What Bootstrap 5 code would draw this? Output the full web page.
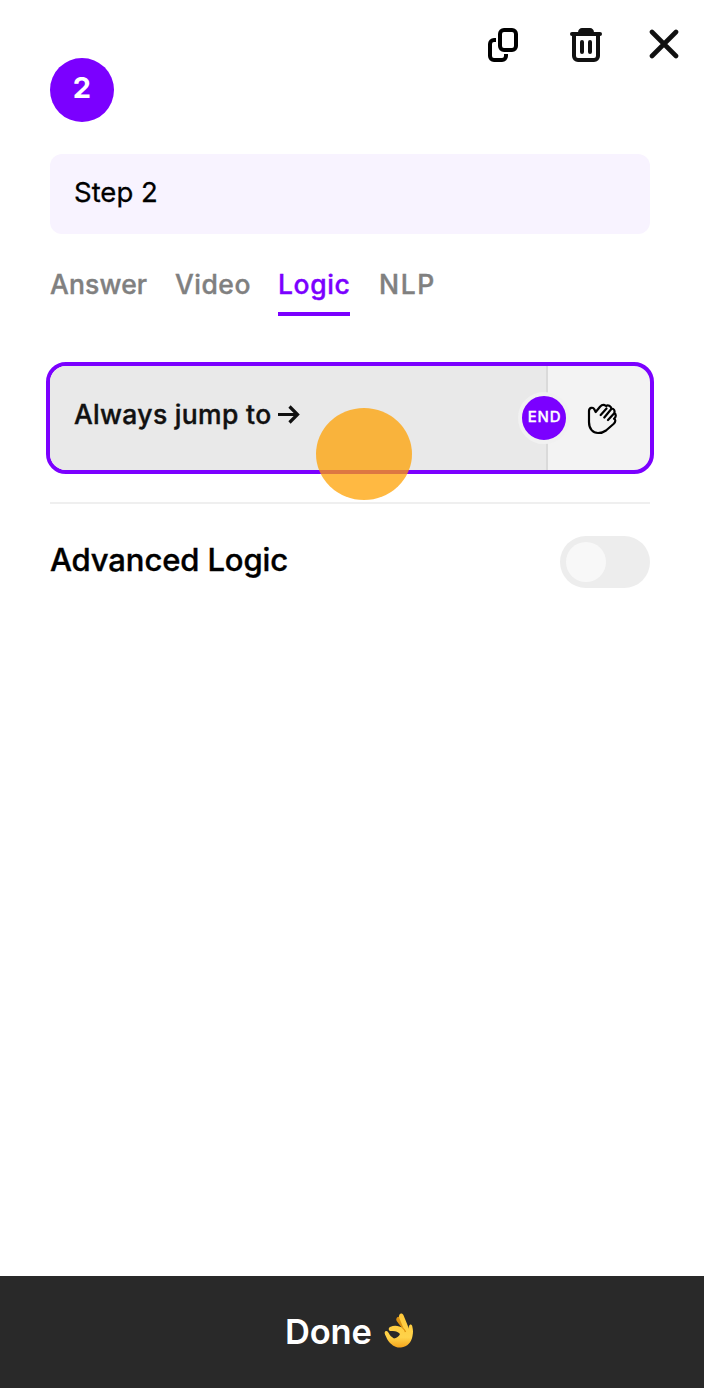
<!DOCTYPE html>
<html lang="en">
<head>
<meta charset="utf-8">
<meta name="viewport" content="width=device-width, initial-scale=1">
<title>Step 2</title>
<link href="https://cdn.jsdelivr.net/npm/bootstrap@5.3.0/dist/css/bootstrap.min.css" rel="stylesheet">
<style>
  body { font-family: Inter, "Liberation Sans", sans-serif; font-weight: 500; color: #000; background: #fff; line-height: 1; }
  svg { display: block; flex: none; }
  .panel { padding-left: 50px; padding-right: 54px; }
  .topbar { height: 122px; margin-right: -29px; }
  .tools { margin-top: 26px; }
  .copy-icon { margin-right: 47px; }
  .trash-icon { margin-right: 45px; }
  .step-number { width: 64px; height: 64px; margin-top: 58px; background: #7b00ff; font-size: 29px; font-weight: 700; padding-bottom: 5px; }
  .step-name { height: 80px; margin-top: 32px; padding: 0 24px 4px; border: 0; border-radius: 12px; background: #f8f3ff; font-size: 27.5px; font-weight: 400; color: #000; -webkit-text-stroke: .3px; }
  .step-name:focus { background: #f8f3ff; }
  .tabs { margin-top: 32px; gap: 28px; font-size: 26.5px; -webkit-text-stroke: .4px; }
  .tabs .nav-link { height: 50px; padding: 5px 0 0; color: #808080; border-bottom: 4px solid transparent; white-space: nowrap; letter-spacing: .15px; }
  .tabs .t2 { letter-spacing: .5px; }
  .tabs .nav-link.active { color: #7b00ff; border-color: #7b00ff; letter-spacing: .6px; }
  .tabs .t4 { letter-spacing: 1.6px; padding-left: 1px; }
  .t1 { width: 97px; } .t2 { width: 75px; } .t3 { width: 72px; }
  .jump { height: 112px; margin: 46px -4px 0; border: 4px solid #7b00ff; border-radius: 20px; background: #f3f3f3; }
  .jump-rule { width: 498px; padding: 0 0 7px 24px; border-right: 2px solid #dadada; border-radius: 16px 0 0 16px; background: #e9e9e9; font-size: 26.5px; color: #111; }
  .jump-text { width: 196px; letter-spacing: .32px; white-space: nowrap; -webkit-text-stroke: .4px; }
  .end-dot { width: 52px; height: 52px; left: 468px; top: 26px; border: 4px solid #f1f1f1; background: #7b00ff; font-size: 15px; letter-spacing: .8px; padding: 0 0 3px 1px; -webkit-text-stroke: .3px; }
  .hand { margin-left: 38px; margin-top: 2px; }
  .touch { width: 96px; height: 92px; left: 266px; top: 42px; background: rgba(255,161,0,.74); }
  .rule { height: 2px; margin-top: 28px; background: #efefef; }
  .advanced { height: 52px; margin-top: 32px; font-size: 31px; letter-spacing: -.12px; -webkit-text-stroke: .4px; }
  .advanced-title { padding-bottom: 6px; }
  .toggle { width: 90px; height: 52px; padding: 6px; background: #ededed; }
  .knob { width: 40px; height: 40px; background: #f8f8f8; }
  .done { height: 112px; background: #292929; font-size: 34.5px; font-weight: 600; color: #fff; letter-spacing: -.2px; }
  .done-text { width: 87px; margin-left: -5px; padding-bottom: 1px; }
</style>
</head>
<body>
<div class="vh-100 d-flex flex-column overflow-hidden">
  <main class="panel flex-grow-1">
    <header class="topbar d-flex justify-content-between align-items-start">
      <div class="step-number rounded-circle text-white d-flex align-items-center justify-content-center">2</div>
      <div class="tools d-flex">
        <svg class="copy-icon" width="36" height="38" viewBox="0 0 36 38" fill="none" stroke="#000" stroke-width="4"><rect x="14" y="4" width="16" height="20" rx="4"/><path d="M10 14H8a4 4 0 0 0-4 4v12a4 4 0 0 0 4 4h8a4 4 0 0 0 4-4v-2"/></svg>
        <svg class="trash-icon" width="34" height="38" viewBox="0 0 34 38" fill="none" stroke="#111" stroke-width="4" stroke-linecap="round"><path d="M3 8h28"/><path d="M9 6.500c0-3 2-4.500 4-4.500h8c2 0 4 1.500 4 4.500z" fill="#111" stroke="none"/><path d="M5 9v21a4 4 0 0 0 4 4h16a4 4 0 0 0 4-4V9M13 16v10M21 16v10"/></svg>
        <svg width="31" height="38" viewBox="0 0 31 38" stroke="#111" stroke-width="4.600" stroke-linecap="round"><path d="M4 6l24 24M28 6L4 30"/></svg>
      </div>
    </header>
    <input class="step-name form-control shadow-none" value="Step 2" aria-label="Step name">
    <nav class="tabs nav">
      <a class="nav-link t1" href="#">Answer</a>
      <a class="nav-link t2" href="#">Video</a>
      <a class="nav-link t3 active" href="#">Logic</a>
      <a class="nav-link t4" href="#">NLP</a>
    </nav>
    <section class="jump d-flex position-relative">
      <div class="jump-rule d-flex align-items-center"><span class="jump-text">Always jump to</span>
        <svg class="ms-2" width="22" height="20" viewBox="0 0 22 20" fill="none" stroke="#111" stroke-width="3.200"><path d="M0 9.500h19M11.500 1.500l8 8-8 8"/></svg>
      </div>
      <svg class="hand align-self-center" width="32" height="34" viewBox="0 0 32 34" fill="none" stroke="#000" stroke-width="2.200" stroke-linecap="round" stroke-linejoin="round"><path d="M9.700 10L8.300 7.200C7 4.800 3 5.500 3 9v11c0 7 4 11 9 11 4 0 6-1 8-2.500l7.500-6.500c2.500-2.300 2.200-4.500.5-5.200 2-1.800 2.500-4.300.3-5.800.8-2.500-.5-4.700-3-4.500C25 4 22 2.500 20 4c-2-1.700-4-1.500-6 .8zM14.700 13l5.800-6.500M18.300 15.500l7-8.500M22 18l6-6.500"/></svg>
      <div class="end-dot position-absolute rounded-circle text-white d-flex align-items-center justify-content-center">END</div>
      <div class="touch position-absolute rounded-circle"></div>
    </section>
    <div class="rule"></div>
    <div class="advanced d-flex align-items-center justify-content-between">
      <span class="advanced-title">Advanced Logic</span>
      <div class="toggle rounded-pill" role="switch" aria-checked="false"><div class="knob rounded-circle"></div></div>
    </div>
  </main>
  <button class="done btn rounded-0 border-0 w-100 p-0 d-flex align-items-center justify-content-center">
    <span class="done-text text-start">Done</span>
    <svg style="margin:-3px 0 0 12px" width="30" height="38" viewBox="0 0 30 38"><defs><linearGradient id="skin" x2="0" y2="1"><stop stop-color="#ffc83a"/><stop offset=".7" stop-color="#ffd34a"/><stop offset="1" stop-color="#f5a51c"/></linearGradient></defs><path d="M13 5.500c1-1.500 3-.5 4 1.500l5 10-4-1-5-6.500c-1-1.300-1-2.800 0-4z" fill="#dc9212"/><path fill="url(#skin)" d="M15.500 2.500c1-1.600 3.200-1.200 4 .8l4.300 10.500.7 3c0-2 .5-3.300 1.200-3.800 1.300-1 2.600 0 2.700 2C29 18 29.400 20 28.500 24c-1 6-5 11-11.500 11.500-6 .5-10-3-13-7-1.500-2-1.500-3.500-2.500-5-.8-1.500-1.500-4 .5-4.500 1.500-.3 2 1 3 2.500 1 2 2.500 3.500 5 5 2.500-.5 5-2 6-4.500-2-2.500-5-3.500-9-3-2.500.3-3-3-1-4 5-2.200 9-1 13.500 1.200L15.500 6.500c-.6-1.500-.7-2.800 0-4z"/><path d="M18.500 16c1.600 1 2.500 2 3 4" fill="none" stroke="#df9511" stroke-width="1.300"/></svg>
  </button>
</div>
<script src="https://cdn.jsdelivr.net/npm/bootstrap@5.3.0/dist/js/bootstrap.bundle.min.js"></script>
</body>
</html>
